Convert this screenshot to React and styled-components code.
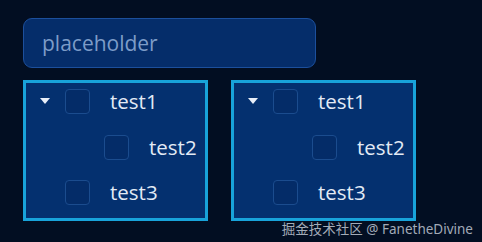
import React from 'react';
import styled, { createGlobalStyle } from 'styled-components';

const GlobalStyle = createGlobalStyle`
  html, body {
    margin: 0;
    padding: 0;
    background: #020e22;
  }
  body {
    font-family: "Open Sans", "Noto Sans", "Noto Sans CJK SC", sans-serif;
  }
`;

const Page = styled.div`
  position: relative;
  width: 482px;
  height: 242px;
  box-sizing: border-box;
  padding: 18px 0 0 23px;
  overflow: hidden;
`;

const Input = styled.input`
  display: block;
  box-sizing: border-box;
  width: 293px;
  height: 50px;
  padding: 0 18px;
  border: 1px solid #1c4f9c;
  border-radius: 9px;
  background: #052d6a;
  color: #dde6f3;
  font-family: "Open Sans", sans-serif;
  font-size: 21px;
  outline: none;
  &::placeholder {
    color: #7d9cc8;
  }
`;

const Trees = styled.div`
  display: flex;
  gap: 23px;
  margin-top: 12px;
`;

const TreeBox = styled.div`
  box-sizing: border-box;
  width: 185px;
  height: 141px;
  border: 3px solid #18a3da;
  background: #04306f;
`;

const Row = styled.div`
  display: flex;
  align-items: center;
  height: 37px;
  margin-bottom: 8.5px;
  padding-left: ${(p) => 14 + p.$level * 39}px;
`;

const Switcher = styled.span`
  display: flex;
  align-items: center;
  width: 25px;
  height: 100%;
`;

const Caret = styled.span`
  width: 0;
  height: 0;
  border-left: 5px solid transparent;
  border-right: 5px solid transparent;
  border-top: 6px solid #e8eef8;
  margin-top: -1px;
`;

const Check = styled.span`
  box-sizing: border-box;
  width: 25px;
  height: 25px;
  border: 1px solid #1b4c8e;
  border-radius: 4px;
  background: #042c68;
  margin-right: 20px;
`;

const Label = styled.span`
  color: #e2eaf5;
  font-size: 20.5px;
  line-height: 1;
`;

const Watermark = styled.div`
  position: absolute;
  right: 9px;
  bottom: 4px;
  font-family: "Noto Sans", "Noto Sans CJK SC", sans-serif;
  font-size: 13.5px;
  color: #b4bcc8;
  opacity: 0.9;
`;

const nodes = [
  { key: '1', title: 'test1', level: 0, open: true },
  { key: '2', title: 'test2', level: 1 },
  { key: '3', title: 'test3', level: 0 },
];

function Tree() {
  return (
    <TreeBox>
      {nodes.map((n) => (
        <Row key={n.key} $level={n.level}>
          <Switcher>{n.open && <Caret />}</Switcher>
          <Check />
          <Label>{n.title}</Label>
        </Row>
      ))}
    </TreeBox>
  );
}

export default function App() {
  return (
    <>
      <GlobalStyle />
      <Page>
        <Input placeholder="placeholder" />
        <Trees>
          <Tree />
          <Tree />
        </Trees>
        <Watermark>掘金技术社区 @ FanetheDivine</Watermark>
      </Page>
    </>
  );
}
